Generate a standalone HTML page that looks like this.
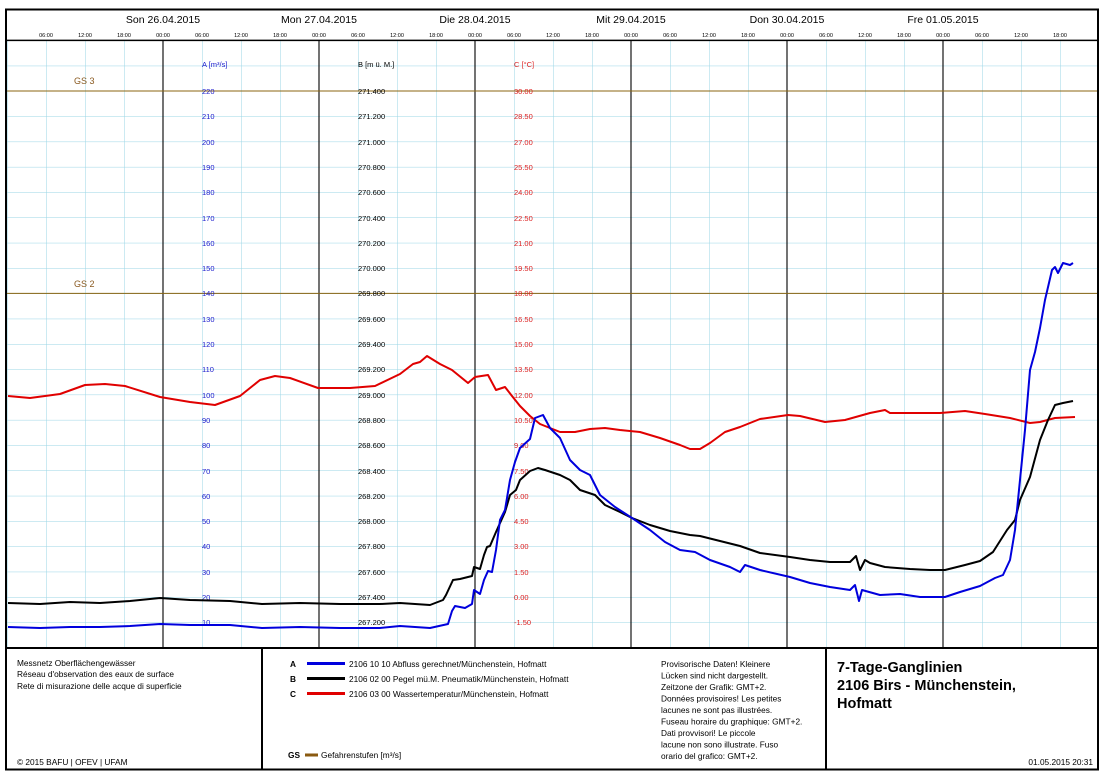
<!DOCTYPE html>
<html><head><meta charset="utf-8"><style>
html,body{margin:0;padding:0;background:#fff;}
svg{display:block;font-family:"Liberation Sans",Arial,sans-serif;}
</style></head><body>
<svg width="1105" height="773" viewBox="0 0 1105 773" xmlns="http://www.w3.org/2000/svg">
<defs>
<pattern id="g" x="7" y="40.4" width="39" height="25.3" patternUnits="userSpaceOnUse">
<line x1="0" y1="0" x2="39" y2="0" stroke="#9ad6e6" stroke-width="1"/>
<line x1="0" y1="0" x2="0" y2="25.3" stroke="#9ad6e6" stroke-width="1"/>
</pattern>
</defs>
<rect x="0" y="0" width="1105" height="773" fill="#fff"/>
<rect x="7" y="40.4" width="1091" height="607.2" fill="url(#g)"/>
<g stroke="#000" stroke-width="1.1">
<line x1="163" y1="40" x2="163" y2="648"/><line x1="319" y1="40" x2="319" y2="648"/><line x1="475" y1="40" x2="475" y2="648"/><line x1="631" y1="40" x2="631" y2="648"/><line x1="787" y1="40" x2="787" y2="648"/><line x1="943" y1="40" x2="943" y2="648"/>
</g>
<g stroke="#8b6510" stroke-width="1"><line x1="7" y1="91" x2="1098" y2="91"/><line x1="7" y1="293.4" x2="1098" y2="293.4"/></g>
<g fill="#8a5a20" font-size="9"><text x="74" y="84">GS 3</text><text x="74" y="287">GS 2</text></g>
<g font-size="10.5" text-anchor="middle" fill="#000">
<text x="163" y="23">Son 26.04.2015</text><text x="319" y="23">Mon 27.04.2015</text><text x="475" y="23">Die 28.04.2015</text><text x="631" y="23">Mit 29.04.2015</text><text x="787" y="23">Don 30.04.2015</text><text x="943" y="23">Fre 01.05.2015</text>
</g>
<g font-size="5.5" text-anchor="middle" fill="#000">
<text x="46" y="37">06:00</text><text x="85" y="37">12:00</text><text x="124" y="37">18:00</text><text x="163" y="37">00:00</text>
<text x="202" y="37">06:00</text><text x="241" y="37">12:00</text><text x="280" y="37">18:00</text><text x="319" y="37">00:00</text>
<text x="358" y="37">06:00</text><text x="397" y="37">12:00</text><text x="436" y="37">18:00</text><text x="475" y="37">00:00</text>
<text x="514" y="37">06:00</text><text x="553" y="37">12:00</text><text x="592" y="37">18:00</text><text x="631" y="37">00:00</text>
<text x="670" y="37">06:00</text><text x="709" y="37">12:00</text><text x="748" y="37">18:00</text><text x="787" y="37">00:00</text>
<text x="826" y="37">06:00</text><text x="865" y="37">12:00</text><text x="904" y="37">18:00</text><text x="943" y="37">00:00</text>
<text x="982" y="37">06:00</text><text x="1021" y="37">12:00</text><text x="1060" y="37">18:00</text>
</g>
<g font-size="7.5" fill="#1a1acc">
<text x="202" y="67">A [m³/s]</text>
<text x="202" y="94">220</text><text x="202" y="119">210</text><text x="202" y="145">200</text><text x="202" y="170">190</text><text x="202" y="195">180</text><text x="202" y="221">170</text><text x="202" y="246">160</text><text x="202" y="271">150</text><text x="202" y="296">140</text><text x="202" y="322">130</text><text x="202" y="347">120</text><text x="202" y="372">110</text><text x="202" y="398">100</text><text x="202" y="423">90</text><text x="202" y="448">80</text><text x="202" y="474">70</text><text x="202" y="499">60</text><text x="202" y="524">50</text><text x="202" y="549">40</text><text x="202" y="575">30</text><text x="202" y="600">20</text><text x="202" y="625">10</text>
</g>
<g font-size="7.5" fill="#000">
<text x="358" y="67">B [m ü. M.]</text>
<text x="358" y="94">271.400</text><text x="358" y="119">271.200</text><text x="358" y="145">271.000</text><text x="358" y="170">270.800</text><text x="358" y="195">270.600</text><text x="358" y="221">270.400</text><text x="358" y="246">270.200</text><text x="358" y="271">270.000</text><text x="358" y="296">269.800</text><text x="358" y="322">269.600</text><text x="358" y="347">269.400</text><text x="358" y="372">269.200</text><text x="358" y="398">269.000</text><text x="358" y="423">268.800</text><text x="358" y="448">268.600</text><text x="358" y="474">268.400</text><text x="358" y="499">268.200</text><text x="358" y="524">268.000</text><text x="358" y="549">267.800</text><text x="358" y="575">267.600</text><text x="358" y="600">267.400</text><text x="358" y="625">267.200</text>
</g>
<g font-size="7.5" fill="#dd2222">
<text x="514" y="67">C [°C]</text>
<text x="514" y="94">30.00</text><text x="514" y="119">28.50</text><text x="514" y="145">27.00</text><text x="514" y="170">25.50</text><text x="514" y="195">24.00</text><text x="514" y="221">22.50</text><text x="514" y="246">21.00</text><text x="514" y="271">19.50</text><text x="514" y="296">18.00</text><text x="514" y="322">16.50</text><text x="514" y="347">15.00</text><text x="514" y="372">13.50</text><text x="514" y="398">12.00</text><text x="514" y="423">10.50</text><text x="514" y="448">9.00</text><text x="514" y="474">7.50</text><text x="514" y="499">6.00</text><text x="514" y="524">4.50</text><text x="514" y="549">3.00</text><text x="514" y="575">1.50</text><text x="514" y="600">0.00</text><text x="514" y="625">-1.50</text>
</g>
<g fill="none" stroke-width="2" stroke-linejoin="round">
<polyline stroke="#e00000" points="8,396 30,398 60,394 85,385 105,384 125,386 160,397 190,402 215,405 240,396 260,380 275,376 290,378 318,388 350,388 375,386 400,374 413,364 420,362 427,356 440,364 452,370 468,383 475,377 488,375 496,390 505,387 512,396 520,406 530,416 540,424 560,432 575,432 590,429 605,428 620,430 640,432 660,438 680,445 690,449 700,449 710,443 725,432 740,427 760,419 788,415 800,416 825,422 845,420 870,413 885,410 890,413 940,413 965,411 985,414 1010,418 1030,423 1040,422 1055,418 1075,417"/>
<polyline stroke="#000" points="8,603 40,604 70,602 100,603 130,601 160,598 190,600 230,601 262,604 300,603 340,604 380,604 400,603 430,605 443,600 446,595 453,580 460,579 472,576 474,567 480,569 484,555 487,547 490,546 496,532 505,512 510,495 516,490 520,480 530,471 538,468 545,470 560,475 570,480 580,490 595,495 605,505 620,512 632,518 650,525 670,531 690,535 700,536 720,541 740,546 760,553 790,557 810,560 830,562 850,562 856,556 860,570 865,560 870,563 885,567 910,569 930,570 945,570 965,565 980,561 993,552 1007,530 1015,520 1020,500 1030,477 1040,440 1048,420 1055,405 1063,403 1073,401"/>
<polyline stroke="#0000dd" points="8,627 40,628 70,627 100,627 130,626 160,624 190,625 230,625 262,628 300,627 340,628 380,628 400,626 430,628 448,624 452,611 455,606 465,608 472,604 474,590 480,594 484,580 488,571 492,572 496,550 500,520 505,510 510,480 515,462 520,448 530,439 535,418 543,415 550,428 560,438 570,460 580,470 590,475 600,495 615,507 632,518 650,530 665,542 680,550 695,552 710,560 730,567 740,572 745,565 760,570 790,577 810,583 830,587 850,590 855,585 859,601 862,590 880,595 900,594 920,597 945,597 960,592 980,586 995,578 1003,575 1010,560 1015,530 1020,480 1025,430 1030,370 1035,352 1040,328 1045,300 1052,270 1055,267 1058,273 1063,263 1070,265 1073,263"/>
</g>
<g stroke="#000" fill="none">
<rect x="6" y="9.5" width="1092" height="760" stroke-width="2"/>
<line x1="6" y1="40.4" x2="1098" y2="40.4" stroke-width="1.5"/>
<line x1="6" y1="648" x2="1098" y2="648" stroke-width="2"/>
<line x1="262" y1="648" x2="262" y2="770" stroke-width="2"/>
<line x1="826" y1="648" x2="826" y2="770" stroke-width="2"/>
</g>
<g font-size="8.3" fill="#000">
<text x="17" y="666">Messnetz Oberflächengewässer</text>
<text x="17" y="677">Réseau d'observation des eaux de surface</text>
<text x="17" y="689">Rete di misurazione delle acque di superficie</text>
<text x="17" y="765">© 2015 BAFU | OFEV | UFAM</text>
<text x="290" y="667" font-weight="bold">A</text>
<text x="290" y="682" font-weight="bold">B</text>
<text x="290" y="697" font-weight="bold">C</text>
<text x="288" y="758" font-weight="bold">GS</text>
<text x="349" y="667">2106 10 10 Abfluss gerechnet/Münchenstein, Hofmatt</text>
<text x="349" y="682">2106 02 00 Pegel mü.M. Pneumatik/Münchenstein, Hofmatt</text>
<text x="349" y="697">2106 03 00 Wassertemperatur/Münchenstein, Hofmatt</text>
<text x="321" y="758">Gefahrenstufen [m³/s]</text>
<text x="661" y="667">Provisorische Daten! Kleinere</text>
<text x="661" y="678.5">Lücken sind nicht dargestellt.</text>
<text x="661" y="690">Zeitzone der Grafik: GMT+2.</text>
<text x="661" y="701.5">Données provisoires! Les petites</text>
<text x="661" y="713">lacunes ne sont pas illustrées.</text>
<text x="661" y="724.5">Fuseau horaire du graphique: GMT+2.</text>
<text x="661" y="736">Dati provvisori! Le piccole</text>
<text x="661" y="747.5">lacune non sono illustrate. Fuso</text>
<text x="661" y="759">orario del grafico: GMT+2.</text>
<text x="1093" y="765" text-anchor="end">01.05.2015 20:31</text>
</g>
<g stroke-width="3"><line x1="307" y1="663.5" x2="345" y2="663.5" stroke="#0000dd"/><line x1="307" y1="678.5" x2="345" y2="678.5" stroke="#000"/><line x1="307" y1="693.5" x2="345" y2="693.5" stroke="#e00000"/><line x1="305" y1="755" x2="318" y2="755" stroke="#8a5a10"/></g>
<g font-size="14.5" font-weight="bold" fill="#000">
<text x="837" y="672">7-Tage-Ganglinien</text>
<text x="837" y="690">2106 Birs - Münchenstein,</text>
<text x="837" y="708">Hofmatt</text>
</g>
</svg>
</body></html>
